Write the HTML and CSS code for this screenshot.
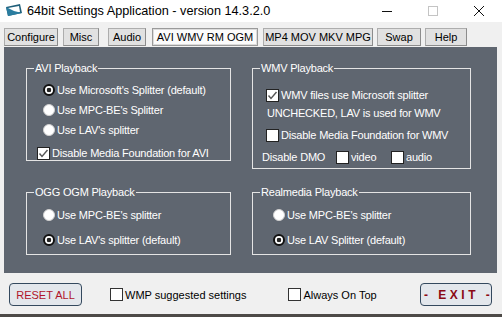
FILE: index.html
```html
<!DOCTYPE html>
<html lang="en">
<head>
    <meta charset="UTF-8">
    <title>64bit Settings Application</title>
    <link rel="stylesheet" href="styles.css">
</head>
<body>
    <div class="window">
        <header class="titlebar">
            <svg class="app-icon" width="18" height="14" viewBox="0 0 18 14">
                <polygon points="1,3 15,0 17,9 3,12" fill="#1f5f7a"/>
                <polygon points="3,4 14,2 15,8 4,10" fill="#ffffff"/>
                <polygon points="1,3 9,7 17,9 3,12" fill="#2a7da0"/>
            </svg>
            <span class="title">64bit Settings Application - version 14.3.2.0</span>
            <div class="controls">
                <span class="ctl"><svg width="10" height="10" viewBox="0 0 10 10"><line x1="0" y1="5.5" x2="10" y2="5.5" stroke="#111" stroke-width="1"/></svg></span>
                <span class="ctl"><svg width="10" height="10" viewBox="0 0 10 10"><rect x="0.5" y="0.5" width="9" height="9" fill="none" stroke="#c4c4c4" stroke-width="1"/></svg></span>
                <span class="ctl"><svg width="10" height="10" viewBox="0 0 10 10"><path d="M0 0 L10 10 M10 0 L0 10" stroke="#111" stroke-width="1"/></svg></span>
            </div>
        </header>

        <nav class="tabs">
            <button class="tab">Configure</button>
            <button class="tab">Misc</button>
            <button class="tab">Audio</button>
            <button class="tab active">AVI WMV RM OGM</button>
            <button class="tab">MP4 MOV MKV MPG</button>
            <button class="tab">Swap</button>
            <button class="tab">Help</button>
        </nav>

        <main class="panel">
            <fieldset class="group group-avi">
                <legend>AVI Playback</legend>
                <div class="group-body">
                    <div class="opt"><span class="radio on"></span>Use Microsoft's Splitter (default)</div>
                    <div class="opt"><span class="radio"></span>Use MPC-BE's Splitter</div>
                    <div class="opt"><span class="radio"></span>Use LAV's splitter</div>
                    <div class="opt check-row"><span class="box on"><svg width="11" height="11" viewBox="0 0 11 11"><path d="M1.5 5.5 L4 8.5 L9.5 2" fill="none" stroke="#555" stroke-width="1.4"/></svg></span>Disable Media Foundation for AVI</div>
                </div>
            </fieldset>

            <fieldset class="group group-wmv">
                <legend>WMV Playback</legend>
                <div class="group-body">
                    <div class="opt"><span class="box on"><svg width="11" height="11" viewBox="0 0 11 11"><path d="M1.5 5.5 L4 8.5 L9.5 2" fill="none" stroke="#555" stroke-width="1.4"/></svg></span>WMV files use Microsoft splitter</div>
                    <div class="opt note">UNCHECKED, LAV is used for WMV</div>
                    <div class="opt"><span class="box"></span>Disable Media Foundation for WMV</div>
                    <div class="opt dmo">
                        <span class="dmo-label">Disable DMO</span>
                        <span class="dmo-item"><span class="box"></span>video</span>
                        <span class="dmo-item"><span class="box"></span>audio</span>
                    </div>
                </div>
            </fieldset>

            <fieldset class="group group-ogg">
                <legend>OGG OGM Playback</legend>
                <div class="group-body">
                    <div class="opt"><span class="radio"></span>Use MPC-BE's splitter</div>
                    <div class="opt"><span class="radio on"></span>Use LAV's splitter (default)</div>
                </div>
            </fieldset>

            <fieldset class="group group-rm">
                <legend>Realmedia Playback</legend>
                <div class="group-body">
                    <div class="opt"><span class="radio"></span>Use MPC-BE's splitter</div>
                    <div class="opt"><span class="radio on"></span>Use LAV Splitter (default)</div>
                </div>
            </fieldset>
        </main>

        <footer class="bottombar">
            <button class="btn-reset">RESET ALL</button>
            <label class="foot-check wmp"><span class="box"></span>WMP suggested settings</label>
            <label class="foot-check ontop"><span class="box"></span>Always On Top</label>
            <button class="btn-exit">- EXIT -</button>
        </footer>
        <div class="shadow"></div>
    </div>
</body>
</html>
```

FILE: styles.css
```css
body {
    margin: 0;
    font-family: "Liberation Sans", Arial, sans-serif;
    font-size: 11px;
    background: #f0f0f0;
    color: #000;
}
.window {
    width: 502px;
    height: 317px;
    overflow: hidden;
    background: #f0f0f0;
}

/* title bar */
.titlebar {
    height: 22px;
    background: #fff;
    display: flex;
    align-items: center;
}
.app-icon {
    margin-left: 5px;
}
.title {
    margin-left: 4px;
    font-size: 12.7px;
}
.controls {
    margin-left: auto;
    display: flex;
}
.ctl {
    width: 46px;
    height: 22px;
    display: flex;
    align-items: center;
    justify-content: center;
}

/* tab buttons */
.tabs {
    height: 25px;
    box-sizing: border-box;
    padding: 6px 0 0 4px;
    display: flex;
}
.tab {
    height: 18px;
    padding: 0;
    font-family: inherit;
    font-size: 11px;
    background: #e1e1e1;
    border: 1px solid #adadad;
    border-right-color: #8c8c8c;
    border-bottom-color: #8c8c8c;
    border-radius: 0;
    color: #000;
}
.tab:nth-child(1) { width: 54px; margin-right: 5px; }
.tab:nth-child(2) { width: 36px; margin-right: 9px; }
.tab:nth-child(3) { width: 38px; margin-right: 6px; }
.tab:nth-child(4) { width: 106px; margin-right: 5px; }
.tab:nth-child(5) { width: 110px; margin-right: 4px; }
.tab:nth-child(6) { width: 44px; margin-right: 4px; }
.tab:nth-child(7) { width: 42px; }
.tab.active {
    background: #fbfbfb;
    border-color: #9a9a9a;
    box-shadow: inset 0 0 0 1px #dcdcdc;
}

/* dark panel */
.panel {
    margin: 0 5px 0 4px;
    height: 226px;
    box-sizing: border-box;
    padding: 14px 0 0 22px;
    background: #5f6670;
    color: #fff;
    letter-spacing: -0.2px;
    display: grid;
    grid-template-columns: 205px 219px;
    grid-template-rows: 108px auto;
    column-gap: 21px;
    row-gap: 16px;
    align-items: start;
}
.group {
    margin: 0;
    padding: 0;
    min-width: 0;
    border: 1px solid #e4e4e4;
}
.group legend {
    margin-left: 7px;
    padding: 0 1px;
    font-size: 11px;
    line-height: 14px;
}
.opt {
    display: flex;
    align-items: center;
    height: 20px;
    white-space: nowrap;
}
.radio {
    width: 12px;
    height: 12px;
    box-sizing: border-box;
    border-radius: 50%;
    background: #fff;
    border: 1px solid #d0d0d0;
    margin-right: 2px;
    flex: none;
}
.radio.on {
    border: 2px solid #111;
    background: radial-gradient(circle, #222 0 2px, #fff 2.6px);
}
.box {
    width: 13px;
    height: 13px;
    box-sizing: border-box;
    border: 1px solid #222;
    background: #fff;
    margin-right: 2px;
    flex: none;
    display: flex;
    align-items: center;
    justify-content: center;
}

.group-avi .group-body {
    padding: 5px 0 0 16px;
}
.group-avi .check-row {
    margin: 6px 0 0 -6px;
    height: 14px;
}

.group-wmv .group-body {
    padding: 11px 0 2px 13px;
}
.group-wmv .opt {
    height: 18px;
}
.group-wmv .opt + .opt + .opt {
    margin-top: 4px;
}
.group-wmv .note {
    padding-left: 1px;
}
.dmo {
    margin-left: -4px;
}
.dmo-label {
    width: 74px;
}
.dmo-item {
    display: flex;
    align-items: center;
    width: 55px;
}

.group-ogg .group-body,
.group-rm .group-body {
    padding: 6px 0 4px 16px;
}
.group-rm .group-body {
    padding-left: 20px;
}
.group-ogg .opt + .opt,
.group-rm .opt + .opt {
    margin-top: 5px;
}

/* bottom bar */
.bottombar {
    height: 41px;
    box-sizing: border-box;
    padding: 10px 0 0 9px;
    display: flex;
    align-items: flex-start;
}
.btn-reset,
.btn-exit {
    height: 23px;
    padding: 0;
    font-family: inherit;
    background: #e3e7ec;
    border: 1px solid #34495e;
    border-radius: 4px;
    white-space: nowrap;
}
.btn-reset {
    width: 73px;
    font-size: 11px;
    color: #b0142a;
}
.btn-exit {
    width: 72px;
    margin-left: auto;
    margin-right: 10px;
    padding-left: 3px;
    font-size: 12px;
    font-weight: bold;
    letter-spacing: 3.5px;
    color: #8b0a14;
}
.foot-check {
    height: 23px;
    display: flex;
    align-items: center;
    font-size: 11px;
}
.foot-check .box {
    border-color: #333;
}
.wmp {
    margin-left: 28px;
}
.ontop {
    margin-left: 42px;
}
.shadow {
    height: 3px;
    background: #4d4a47;
}
```
